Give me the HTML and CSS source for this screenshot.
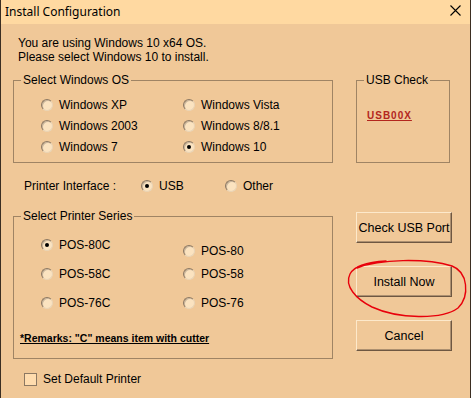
FILE: index.html
```html
<!DOCTYPE html>
<html lang="en">
<head>
  <meta charset="UTF-8">
  <title>Install Configuration</title>
  <link rel="stylesheet" href="styles.css">
</head>
<body>
  <div class="window">
    <header class="titlebar">
      <span class="title">Install Configuration</span>
      <svg class="close" width="11" height="11" viewBox="0 0 11 11">
        <path d="M0.5 0.5 L10.5 10.5 M10.5 0.5 L0.5 10.5" stroke="#000" stroke-width="1.1" fill="none"/>
      </svg>
    </header>

    <main class="content">
      <p class="intro">You are using Windows 10 x64 OS.<br>Please select Windows 10 to install.</p>

      <fieldset class="group os-group">
        <legend>Select Windows OS</legend>
        <div class="os-grid">
          <label class="opt"><input type="radio" name="os"> Windows XP</label>
          <label class="opt"><input type="radio" name="os"> Windows Vista</label>
          <label class="opt"><input type="radio" name="os"> Windows 2003</label>
          <label class="opt"><input type="radio" name="os"> Windows 8/8.1</label>
          <label class="opt"><input type="radio" name="os"> Windows 7</label>
          <label class="opt"><input type="radio" name="os" checked> Windows 10</label>
        </div>
      </fieldset>

      <fieldset class="group usb-group">
        <legend>USB Check</legend>
        <a href="#" class="usb-link">USB00X</a>
      </fieldset>

      <div class="iface">
        <span class="iface-label">Printer Interface :</span>
        <label class="opt iface-usb"><input type="radio" name="iface" checked> USB</label>
        <label class="opt"><input type="radio" name="iface"> Other</label>
      </div>

      <fieldset class="group series-group">
        <legend>Select Printer Series</legend>
        <div class="series-cols">
          <div class="series-col">
            <label class="opt"><input type="radio" name="series" checked> POS-80C</label>
            <label class="opt"><input type="radio" name="series"> POS-58C</label>
            <label class="opt"><input type="radio" name="series"> POS-76C</label>
          </div>
          <div class="series-col second">
            <label class="opt"><input type="radio" name="series"> POS-80</label>
            <label class="opt"><input type="radio" name="series"> POS-58</label>
            <label class="opt"><input type="radio" name="series"> POS-76</label>
          </div>
        </div>
        <p class="remarks">*Remarks: "C" means item with cutter</p>
      </fieldset>

      <div class="actions">
        <button class="btn">Check USB Port</button>
        <button class="btn">Install Now</button>
        <button class="btn">Cancel</button>
      </div>

      <label class="opt default-printer"><input type="checkbox"> Set Default Printer</label>
    </main>

    <!-- hand drawn mark around the install button -->
    <svg class="mark" width="471" height="398" viewBox="0 0 471 398">
      <path d="M357 268 C 380 259, 425 258, 452 266 C 468 272, 470 296, 458 308 C 442 320, 398 319, 372 307 C 356 299, 344 286, 350 274 C 354 266, 368 262, 386 261"
            fill="none" stroke="#e8000b" stroke-width="1.4" stroke-linecap="round"/>
    </svg>
  </div>
</body>
</html>
```

FILE: styles.css
```css
/* Reset */
* {
  margin: 0;
  padding: 0;
  box-sizing: border-box;
}

body {
  font-family: "Liberation Sans", Arial, sans-serif;
  font-size: 12px;
  color: #000;
  background: #f0c898;
}

/* Window frame */
.window {
  position: relative;
  width: 471px;
  height: 398px;
  background: #f0c898;
  border-left: 1px solid #3b2e22;
  border-right: 1px solid #3b2e22;
  overflow: hidden;
}

.titlebar {
  display: flex;
  justify-content: space-between;
  align-items: center;
  height: 24px;
  padding: 0 9px 0 4px;
  background: #ffd9a1;
}

.title {
  font-family: "Noto Sans", "Liberation Sans", sans-serif;
  font-size: 12px;
  margin-top: -2px;
}

.close {
  margin-top: -4px;
}

/* Body grid */
.content {
  display: grid;
  grid-template-columns: 320px 96px;
  grid-template-areas:
    "intro intro"
    "os usb"
    "iface ."
    "series actions"
    "check .";
  align-items: start;
  column-gap: 23px;
  padding: 12px 0 0 12px;
}

.intro {
  grid-area: intro;
  line-height: 14px;
  padding-left: 5px;
  margin-bottom: 8px;
}

/* Group boxes */
.group {
  border: 1px solid #9f8464;
  padding: 0;
  min-width: 0;
}

.group legend {
  margin-left: 7px;
  padding: 0 2px;
  line-height: 16px;
}

.os-group {
  grid-area: os;
  height: 91px;
}

.os-grid {
  display: grid;
  grid-template-columns: 142px 1fr;
  grid-auto-rows: 21px;
  padding: 6px 0 0 27px;
}

.usb-group {
  grid-area: usb;
  width: 94px;
  height: 91px;
}

.usb-link {
  display: inline-block;
  margin: 22px 0 0 10px;
  font-size: 10px;
  font-weight: bold;
  letter-spacing: 1px;
  color: #b3261e;
}

/* Radio and checkbox controls */
.opt {
  display: flex;
  align-items: center;
  gap: 6px;
  line-height: 16px;
}

.opt input {
  appearance: none;
  -webkit-appearance: none;
  width: 12px;
  height: 12px;
  border: 1px solid;
  border-color: #8c7862 #e9d4b6 #e9d4b6 #8c7862;
  background: #fbe3c0;
  flex-shrink: 0;
  position: relative;
}

.opt input[type="radio"] {
  border-radius: 50%;
  box-shadow: inset 1px 1px 0 #c9b59b;
}

.opt input[type="radio"]:checked::after {
  content: "";
  position: absolute;
  left: 3px;
  top: 3px;
  width: 4px;
  height: 4px;
  border-radius: 50%;
  background: #000;
}

.opt input[type="checkbox"] {
  width: 13px;
  height: 13px;
  border: 1px solid #8c7862;
  background: #ffdcae;
}

/* Printer interface */
.iface {
  grid-area: iface;
  display: flex;
  align-items: center;
  margin-top: 15px;
  padding-left: 11px;
  line-height: 16px;
}

.iface-label {
  width: 117px;
}

.iface-usb {
  width: 84px;
}

/* Printer series */
.series-group {
  grid-area: series;
  margin-top: 14px;
  height: 151px;
}

.series-cols {
  display: grid;
  grid-template-columns: 142px 1fr;
  padding: 13px 0 0 27px;
}

.series-col {
  display: flex;
  flex-direction: column;
  gap: 13px;
}

.series-col.second .opt:first-child {
  margin-top: 6px;
  margin-bottom: -6px;
}

.remarks {
  margin: 20px 0 0 6px;
  font-size: 10.5px;
  font-weight: bold;
  text-decoration: underline;
  line-height: 14px;
}

/* Buttons */
.actions {
  grid-area: actions;
  display: flex;
  flex-direction: column;
  gap: 23px;
  margin-top: 18px;
}

.btn {
  height: 31px;
  font-family: inherit;
  font-size: 12.5px;
  color: #000;
  background: #f0c898;
  border: 1px solid;
  border-color: #fde9cb #6e5741 #6e5741 #fde9cb;
  box-shadow: inset -1px -1px 0 #ad9070;
}

/* Checkbox row */
.default-printer {
  grid-area: check;
  margin: 12px 0 0 11px;
}

/* Overlay */
.mark {
  position: absolute;
  left: -1px;
  top: 0;
  pointer-events: none;
}
```
